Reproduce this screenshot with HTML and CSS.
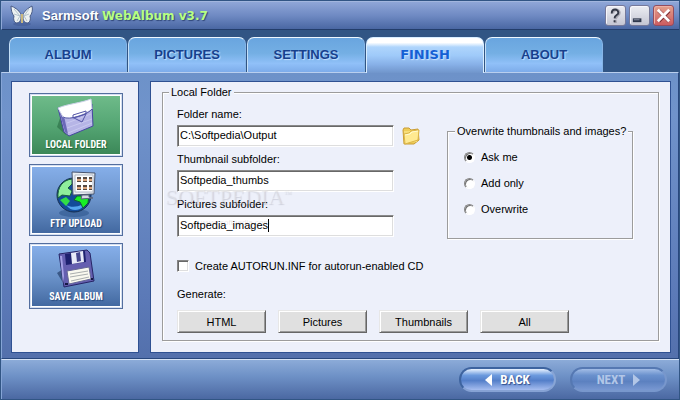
FILE: index.html
```html
<!DOCTYPE html>
<html lang="en">
<head>
<meta charset="utf-8">
<title>Sarmsoft WebAlbum v3.7</title>
<link rel="stylesheet" href="styles.css">
</head>
<body>
<div class="window">
  <header class="titlebar">
    <svg class="logo" width="24" height="22" viewBox="0 0 24 22" aria-hidden="true">
      <ellipse cx="12" cy="19" rx="9" ry="2" fill="#3d568f" opacity=".5"/>
      <path d="M11 9C9 5 4 2 1 1c0 4 1 8 3 10-1 3 0 6 2 7 3 0 5-2 5-6zM13 9c2-4 7-7 9-8 1 4 0 8-2 10 1 3 0 6-2 7-3 0-5-2-5-6z" fill="#eef2f2" stroke="#4a5c86"/>
      <path d="M4 4l6 7-3 5M19 4l-5 7 3 5M4 9l6 2M19 9l-5 2" fill="none" stroke="#b4c3cc"/>
      <path d="M12 9v9" stroke="#c9b77e" stroke-width="2"/>
    </svg>
    <h1 class="title">Sarmsoft <span class="product">WebAlbum v3.7</span></h1>
    <div class="controls">
      <button class="control" type="button" aria-label="Help">
        <svg width="19" height="19" viewBox="0 0 20 20"><path d="M7 8c0-5 7-5 7-1 0 3-4 3-4 7M10 15v3" fill="none" stroke="#aaa9b4" stroke-width="3"/><path d="M6 8c0-6 7-5 7-1 0 3-4 2-4 6M9 15v2" fill="none" stroke="#343948" stroke-width="2"/></svg>
      </button>
      <button class="control" type="button" aria-label="Minimize">
        <svg width="19" height="19" viewBox="0 0 20 20"><path d="M3 13h9v4H3z" fill="#30384d"/><path d="M4 14h6v1H4z" fill="#8d92a6"/></svg>
      </button>
      <button class="control close" type="button" aria-label="Close">
        <svg width="19" height="19" viewBox="0 0 20 20"><path d="M5 5l11 11M16 5L5 16" stroke="#7e2c32" stroke-width="4"/><path d="M4 4l12 12M16 4L4 16" stroke="#fff" stroke-width="3"/></svg>
      </button>
    </div>
  </header>

  <nav class="tabs">
    <button class="tab" type="button">ALBUM</button>
    <button class="tab" type="button">PICTURES</button>
    <button class="tab" type="button">SETTINGS</button>
    <button class="tab active" type="button">FINISH</button>
    <button class="tab" type="button">ABOUT</button>
  </nav>

  <main class="content">
    <aside class="panel sidebar">
      <button class="tile selected" type="button">
        <svg width="42" height="40" viewBox="0 0 42 40" aria-hidden="true">
          <path d="M5 20l-3 9 9 8 3-3z" fill="#286a42" opacity=".6"/>
          <path d="M3 10l6 24 5 4 24-10-1-22z" fill="#b6b5e6" stroke="#4646a0"/>
          <path d="M4 12l6 22 3 2-4-18z" fill="#6a69b8"/>
          <path d="M12 25l24-9M12 30l25-9M13 35l24-10" stroke="#c9c9f0"/>
          <path d="M3 10C12 6 26 5 36 1l1 10c-6 5-24 12-29 8z" fill="#fff" stroke="#cdd2e9"/>
          <path d="M8 19c6 4 26-3 29-8M18 17l13-4v3l-13 4zM19 20l8 4 4-8" fill="none" stroke="#5355a7"/>
        </svg>
        <span>LOCAL FOLDER</span>
      </button>
      <button class="tile" type="button">
        <svg width="46" height="48" viewBox="0 0 46 48" aria-hidden="true">
          <ellipse cx="21" cy="44" rx="15" ry="4" fill="#2f568d" opacity=".6"/>
          <circle cx="21" cy="26" r="17" fill="#124b99" stroke="#162d4e"/>
          <path d="M13 36c7 4 19 1 22-7-3 11-14 17-22 7z" fill="#53a4ed"/>
          <path d="M19 10C10 11 4 18 5 29l4-3 8 1 2-5-4-3 4-4z" fill="#8fee9b" stroke="#185d3c"/>
          <path d="M24 27l8 0 4-2-1 9-5 5-3-6-6-2z" fill="#16ef24" stroke="#145e31"/>
          <path d="M7 31l6-3 4 4-4 5z" fill="#31dd47"/>
          <path d="M19 3l23 1-1 21-21 1z" fill="#e8edf1" stroke="#48546e"/>
          <path d="M22 6h18v17H22z" fill="#fff" stroke="#aeb6c5"/>
          <path d="M24 8h4v5h-4zM30 8h4v5h-4zM36 8h3v5h-3zM24 16h4v5h-4zM30 16h4v5h-4zM36 16h3v5h-3z" fill="#574a43"/>
          <path d="M24 11h4M30 11h4M36 11h3M24 19h4M30 19h4M36 19h3" stroke="#d9a47c" stroke-width="2"/>
          <path d="M29 26h7v2l4 1-12 1z" fill="#d4d9e3" stroke="#596178"/>
        </svg>
        <span>FTP UPLOAD</span>
      </button>
      <button class="tile" type="button">
        <svg width="42" height="42" viewBox="0 0 42 42" aria-hidden="true">
          <path d="M8 21l-6 4 8 13 3-1z" fill="#253f69" opacity=".7"/>
          <path d="M4 6l28-4 3 3 4 28-30 6z" fill="#655fb0" stroke="#262566"/>
          <path d="M5 8l3 28 1-8-2-20z" fill="#a5a2e5"/>
          <path d="M10 6l20-3 1 11-20 3z" fill="#1e216f"/>
          <path d="M16 5l12-2 1 11-12 2z" fill="#e7eaf8"/>
          <path d="M21 5l4-1 1 9-4 1z" fill="#44458d"/>
          <path d="M12 23l22-4 2 12-22 5z" fill="#f9f9ef" stroke="#656895"/>
          <path d="M15 26l18-3M15 29l18-3M16 33l18-4" stroke="#aaaeae"/>
          <path d="M10 35h3v2h-3zM36 30h2v2h-2z" fill="#151844"/>
        </svg>
        <span>SAVE ALBUM</span>
      </button>
    </aside>

    <form class="panel settings">
      <fieldset class="group local">
        <legend>Local Folder</legend>
        <div class="columns">
          <div class="fields">
            <div class="field">
              <label for="folder">Folder name:</label>
              <input id="folder" type="text" value="C:\Softpedia\Output">
            </div>
            <div class="field">
              <label for="thumbs">Thumbnail subfolder:</label>
              <input id="thumbs" type="text" value="Softpedia_thumbs">
            </div>
            <div class="field">
              <label for="images">Pictures subfolder:</label>
              <input id="images" type="text" value="Softpedia_images">
              <span class="caret"></span>
            </div>
            <div class="watermark">SOFTPEDIA<sup>™</sup></div>
            <div class="watermark-url">www.softpedia.com</div>
          </div>
          <button class="browse" type="button" aria-label="Browse for folder">
            <svg width="18" height="18" viewBox="0 0 18 18"><path d="M1 3l1-2 5 0 2 2 7-1 1 11-5 4H2z" fill="#efcd58" stroke="#c99c35"/><path d="M2 4h13v11H2z" fill="#f7de78"/><path d="M2 7l5-1 2-2 8-1-1 10-13 4z" fill="#ffea91" stroke="#dbb547"/><path d="M3 8l5-1 2-2 6-1" fill="none" stroke="#fffbd1"/></svg>
          </button>
          <fieldset class="group overwrite">
            <legend>Overwrite thumbnails and images?</legend>
            <label class="choice"><input type="radio" name="mode" checked>Ask me</label>
            <label class="choice"><input type="radio" name="mode">Add only</label>
            <label class="choice"><input type="radio" name="mode">Overwrite</label>
          </fieldset>
        </div>
        <label class="autorun"><input type="checkbox">Create AUTORUN.INF for autorun-enabled CD</label>
        <p class="generate">Generate:</p>
        <div class="actions">
          <button class="action" type="button">HTML</button>
          <button class="action" type="button">Pictures</button>
          <button class="action" type="button">Thumbnails</button>
          <button class="action" type="button">All</button>
        </div>
      </fieldset>
    </form>
  </main>

  <footer class="footer">
    <button class="pill" type="button"><svg width="7" height="12" viewBox="0 0 7 12"><path d="M7 0v12L0 6z" fill="currentColor"/></svg>BACK</button>
    <button class="pill" type="button" disabled>NEXT<svg width="7" height="12" viewBox="0 0 7 12"><path d="M0 0v12l7-6z" fill="currentColor"/></svg></button>
  </footer>
</div>
</body>
</html>
```
FILE: styles.css
```css
* { box-sizing: border-box; }

body {
  margin: 0;
  font: 11px/14px "Liberation Sans", Arial, sans-serif;
  color: #000;
  background: #2f5483;
}

button { font: inherit; padding: 0; }
svg { display: block; flex: none; }

.window {
  min-height: 100vh;
  display: flex;
  flex-direction: column;
  padding: 1px;
  background: #315584;
}

.titlebar {
  display: flex;
  align-items: center;
  height: 29px;
  padding: 0 5px 0 8px;
  border-top: 1px solid #a2b6de;
  border-left: 1px solid #8fa8d6;
  border-bottom: 1px solid #233d6b;
  background: linear-gradient(#8fa6d7, #6f8ac3 50%, #4a67a3);
}

.title {
  flex: 1;
  margin: 0 0 0 8px;
  font-size: 13px;
  line-height: 16px;
  color: #fff;
  text-shadow: 1px 1px 1px #2f4678;
}

.product {
  font-family: "DejaVu Sans", Verdana, sans-serif;
  font-size: 12px;
  color: #b7ff82;
}

.controls { display: flex; gap: 3px; }

.control {
  width: 21px;
  height: 21px;
  border: 1px solid #76799a;
  border-radius: 3px;
  background: linear-gradient(#ecedf2, #c4c5d3);
  box-shadow: inset 1px 1px 0 #f6f6fb;
}

.control.close {
  border-color: #934d5e;
  background: linear-gradient(#e3a08c, #cc5c60);
  box-shadow: inset 1px 1px 0 #efb0a4;
}

.tabs {
  display: flex;
  gap: 1px;
  padding: 7px 0 0 8px;
  background: #315584;
}

.tab {
  width: 118px;
  height: 35px;
  border: 1px solid #c5e0f8;
  border-top-color: #eef8ff;
  border-bottom: 0;
  border-right-color: #86b5e7;
  border-radius: 7px 7px 0 0;
  background: linear-gradient(#69a5df, #74afe4 45%, #90c0f8 75%, #7dacea);
  font-size: 13px;
  font-weight: bold;
  color: #17418e;
  text-shadow: 1px 1px 1px #c7e0ff;
}

.tab.active {
  position: relative;
  height: 36px;
  margin-bottom: -1px;
  padding-bottom: 1px;
  border-color: #d8edff;
  background:
    linear-gradient(#fff, #fff 50%, #e8f5ff00) 0 0 / 100% 9px no-repeat,
    linear-gradient(#bfe0ff, #9fcaf9 50%, #88b1e8 75%, #7095cb);
  font-family: "DejaVu Sans", Verdana, sans-serif;
  color: #1460d4;
}

.content {
  flex: 1;
  display: flex;
  gap: 11px;
  padding: 8px 7px 5px 9px;
  border: 1px solid #28477d;
  border-top-color: #b9cfee;
  border-left-color: #86a5d6;
  background: linear-gradient(#6d92c9, #7093cb 15%, #5b79b7 80%, #5370ac);
}

.panel {
  border: 1px solid #2f5192;
  background: #edf0fa;
}

.sidebar {
  width: 128px;
  padding: 11px 17px;
  display: flex;
  flex-direction: column;
  gap: 7px;
}

.tile {
  display: flex;
  flex-direction: column;
  align-items: center;
  justify-content: flex-end;
  width: 94px;
  padding: 4px 0;
  border: 1px solid #536e9f;
  outline: 1px solid #fff;
  outline-offset: -3px;
  background: linear-gradient(#87b0eb, #6b93ca 50%, #40669e);
  box-shadow: inset 0 0 0 1px #d4dff1;
  font: bold 10px/14px "Roboto Condensed", "Liberation Sans", sans-serif;
  color: #fff;
  text-shadow: 1px 1px 1px #26477a;
}

.tile.selected {
  background: linear-gradient(#70bc8b, #55a674 50%, #3a8656);
  text-shadow: 1px 1px 1px #1c6439;
}

.settings {
  flex: 1;
  padding: 3px 11px 10px;
}

.group {
  margin: 0;
  min-width: 0;
  border: 1px solid #9c9c9c;
  box-shadow: 1px 1px 0 #fff, inset 1px 1px 0 #fff;
}

.group legend {
  padding: 0 2px;
  background: #edf0fa;
  white-space: nowrap;
}

.local { padding: 3px 14px 7px; }
.local > legend { margin-left: -8px; }

.columns {
  display: flex;
  align-items: flex-start;
}

.fields {
  position: relative;
  width: 217px;
}

.field {
  position: relative;
  display: flex;
  flex-direction: column;
}

.field label { padding: 5px 0 4px; }

.field input {
  height: 22px;
  padding: 0 2px 2px;
  border: 1px solid;
  border-color: #8a8a8a #fff #fff #8a8a8a;
  border-radius: 0;
  box-shadow: inset 1px 1px 0 #686868, inset -1px -1px 0 #dedede;
  background: #fff;
  font: inherit;
}

.caret {
  position: absolute;
  left: 91px;
  bottom: 5px;
  width: 1px;
  height: 13px;
  background: #000;
}

.watermark, .watermark-url {
  position: absolute;
  pointer-events: none;
  white-space: nowrap;
}

.watermark {
  left: -12px;
  top: 80px;
  font: 22px/24px "Liberation Serif", serif;
  color: rgba(255, 255, 255, .25);
  text-shadow: 1px 1px 1px rgba(100, 100, 120, .22);
}

.watermark sup { font-size: 8px; }

.watermark-url {
  left: 24px;
  top: 114px;
  font-size: 8px;
  color: rgba(120, 120, 120, .2);
}

.browse {
  margin: 25px 0 0 8px;
  border: 0;
  background: none;
}

.overwrite {
  width: 186px;
  margin: 22px 0 0 27px;
  padding: 6px 7px 16px;
}

.choice, .autorun {
  display: flex;
  align-items: center;
}

.choice {
  height: 26px;
  padding-left: 9px;
  gap: 6px;
}

input[type="radio"], input[type="checkbox"] {
  appearance: none;
  flex: none;
  margin: 0;
  border: 1px solid;
  border-color: #858585 #fff #fff #858585;
  background: #fff;
}

input[type="radio"] {
  width: 11px;
  height: 11px;
  border-radius: 50%;
  box-shadow: inset 1px 1px 0 #747474;
}

input[type="radio"]:checked {
  background: radial-gradient(circle, #000 0 2px, #fff 3px);
}

input[type="checkbox"] {
  width: 12px;
  height: 12px;
  box-shadow: inset 1px 1px 0 #686868, inset -1px -1px 0 #dedede;
}

.autorun {
  width: max-content;
  margin-top: 20px;
  gap: 6px;
}

.generate { margin: 14px 0 9px; }

.actions { display: flex; gap: 12px; }

.action {
  width: 89px;
  height: 23px;
  border: 1px solid;
  border-color: #e7e7e7 #666 #666 #e7e7e7;
  background: #e0e0e0;
  box-shadow: inset 1px 1px 0 #fff, inset -1px -1px 0 #999;
}

.footer {
  display: flex;
  align-items: center;
  justify-content: flex-end;
  gap: 14px;
  height: 40px;
  padding: 0 12px 0 0;
  border-top: 1px solid #d5e2f5;
  border-left: 1px solid #85a4d5;
  background: linear-gradient(#8cabd8, #6f92c7 40%, #4b68a2);
}

.pill {
  display: flex;
  align-items: center;
  justify-content: center;
  gap: 8px;
  width: 97px;
  height: 25px;
  border: 2px solid #3d639f;
  border-right-color: #88a5d5;
  border-bottom-color: #86a2d4;
  border-radius: 13px;
  background: linear-gradient(#eaf3ff, #6c9ade 30%, #547fc9 55%, #a6bdf0);
  font: bold 13px/16px "Roboto Condensed", "Liberation Sans", sans-serif;
  color: #fff;
  text-shadow: 1px 1px 1px #31508c;
}

.pill:disabled {
  border-color: #5578b2 #7897cc #7897cc #5578b2;
  background: linear-gradient(#a3bde6, #6a91cd 30%, #5c81c0 60%, #7998d2);
  color: #b2c6e7;
  text-shadow: none;
}
```
